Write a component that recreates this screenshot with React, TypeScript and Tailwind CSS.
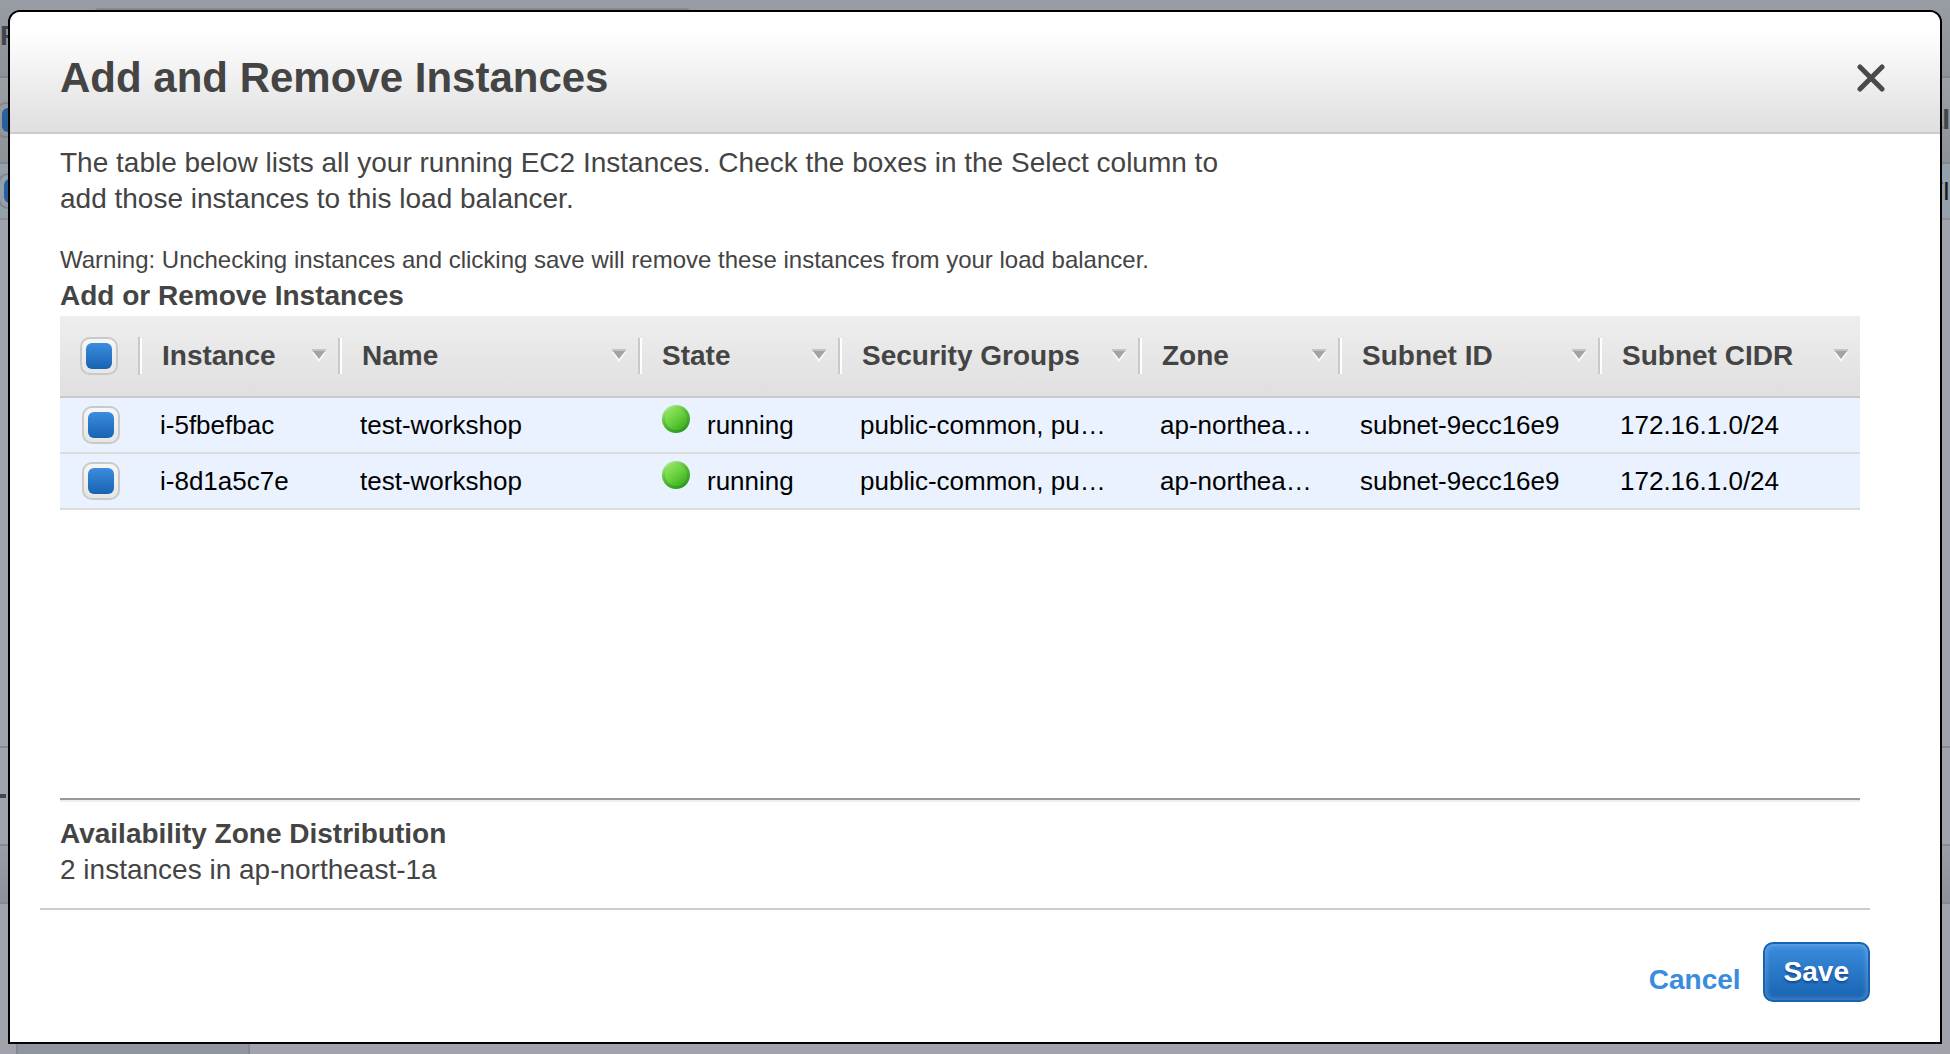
import { useState } from "react";

type Column = { label: string; col: string };

const columns: Column[] = [
  { label: "Instance", col: "w-[200px]" },
  { label: "Name", col: "w-[300px]" },
  { label: "State", col: "w-[200px]" },
  { label: "Security Groups", col: "w-[300px]" },
  { label: "Zone", col: "w-[200px]" },
  { label: "Subnet ID", col: "w-[260px]" },
  { label: "Subnet CIDR", col: "w-[260px]" },
];

const instances = [
  { id: "i-5fbefbac", name: "test-workshop", state: "running", groups: "public-common, pu…", zone: "ap-northea…", subnet: "subnet-9ecc16e9", cidr: "172.16.1.0/24" },
  { id: "i-8d1a5c7e", name: "test-workshop", state: "running", groups: "public-common, pu…", zone: "ap-northea…", subnet: "subnet-9ecc16e9", cidr: "172.16.1.0/24" },
];

function CheckBox({ label, checked, onChange }: { label: string; checked: boolean; onChange: () => void }) {
  return (
    <label className="grid size-[38px] place-items-center rounded-[10px] border-2 border-[#c9c9c9] bg-linear-to-b from-[#f6f6f6] to-[#e6e6e6]">
      <input
        type="checkbox"
        aria-label={label}
        checked={checked}
        onChange={onChange}
        className="size-[26px] appearance-none rounded-md checked:bg-linear-to-b checked:from-[#3b8dde] checked:to-[#1763b2]"
      />
    </label>
  );
}

function SortArrow() {
  return (
    <svg width="14" height="14" viewBox="0 0 14 14" aria-hidden="true" className="shrink-0">
      <path d="M0 3H14L7 13Z" fill="#fbfbfb" />
      <path d="M0 1H14L7 10Z" fill="#a3a3a3" />
      <path d="M0 1H14" stroke="#c4c4c4" strokeWidth="2" />
    </svg>
  );
}

function RunningDot() {
  return (
    <svg width="28" height="28" viewBox="0 0 28 28" aria-hidden="true" className="-mt-3 shrink-0">
      <defs>
        <linearGradient id="dotFill" x1="0.2" y1="0.1" x2="0.85" y2="0.9">
          <stop offset="0" stopColor="#8be35a" />
          <stop offset="0.5" stopColor="#66cf3c" />
          <stop offset="1" stopColor="#3fb025" />
        </linearGradient>
        <linearGradient id="dotRim" x1="0.2" y1="0" x2="0.8" y2="1">
          <stop offset="0" stopColor="#b4ef93" />
          <stop offset="0.4" stopColor="#5cc038" />
          <stop offset="1" stopColor="#27931a" />
        </linearGradient>
      </defs>
      <circle cx="14" cy="14" r="14" fill="url(#dotRim)" />
      <circle cx="14" cy="14" r="11" fill="url(#dotFill)" />
    </svg>
  );
}

/* The dimmed console page that shows round the dialog's edges. */
function ConsoleBackdrop() {
  return (
    <div aria-hidden="true" className="absolute inset-0 flex flex-col overflow-hidden bg-[#a0a3ac] *:shrink-0">
      <div className="flex h-[76px] bg-linear-to-b from-[#989ca4] to-[#8d9198]">
        <span className="mt-5 w-[95px] text-[28px] leading-8 font-bold text-[#41444b]">F</span>
        <div className="mt-2 h-8 w-[595px] rounded-t bg-[#85888f]" />
      </div>
      <div className="flex h-[88px] items-center justify-between border-y-2 border-[#83868e] bg-linear-to-b from-[#9b9fa6] to-[#8d9198]">
        <div className="-ml-1 size-9 rounded-[10px] border-2 border-[#83868e] p-1">
          <div className="size-full rounded-md bg-[#2a609b]" />
        </div>
        <span className="text-[28px] font-bold text-[#41444b]">al</span>
      </div>
      <div className="flex h-14 items-center justify-between border-b-2 border-[#8b8f98] bg-[#94a0ac]">
        <div className="-ml-0.5 size-9 rounded-[10px] border-2 border-[#83868e] p-1">
          <div className="size-full rounded-md bg-[#2a609b]" />
        </div>
        <span className="text-[26px] text-[#16181c]">TI</span>
      </div>
      <div className="h-[526px]" />
      <div className="flex h-[100px] items-center border-y-2 border-[#858992]">
        <span className="h-1 w-1.5 bg-[#43464d]" />
      </div>
      <div className="h-[58px] border-b-2 border-[#858992] bg-linear-to-b from-[#9a9da6] to-[#8d9199]" />
      <div className="h-[120px]" />
      <div className="ml-4 h-12 w-[234px] rounded-lg border-2 border-[#858992] bg-[#91959d]" />
    </div>
  );
}

export default function App() {
  const [selected, setSelected] = useState<boolean[]>(instances.map(() => true));
  const allSelected = selected.every(Boolean);
  const toggle = (index: number) => setSelected(selected.map((value, i) => (i === index ? !value : value)));

  return (
    <div className="relative min-h-screen px-2 py-2.5 font-['Liberation_Sans',Arial,sans-serif] text-[#444]">
      <ConsoleBackdrop />
      <section
        role="dialog"
        aria-labelledby="dialog-title"
        className="relative flex min-h-[calc(100vh-20px)] flex-col overflow-hidden rounded-t-xl border-2 border-black bg-white"
      >
        <header className="flex h-[122px] items-center justify-between border-b-2 border-[#ccc] bg-linear-to-b from-white from-15% to-[#dfdfdf] pt-3 pr-[51px] pl-[50px]">
          <h1 id="dialog-title" className="text-[42px] leading-[52px] font-bold">Add and Remove Instances</h1>
          <button type="button" aria-label="Close" className="p-1">
            <svg width="28" height="28" viewBox="0 0 28 28" fill="none" stroke="#4a4a4a" strokeWidth="5" strokeLinecap="round">
              <path d="M3 3L25 25M25 3L3 25" />
            </svg>
          </button>
        </header>

        <main className="flex grow flex-col pt-[11px] pr-[80px] pl-[50px]">
          <p className="max-w-[1200px] text-[28px] leading-9">
            The table below lists all your running EC2 Instances. Check the boxes in the Select column to add those instances to this load balancer.
          </p>
          <p className="mt-[25px] text-2xl leading-9">
            Warning: Unchecking instances and clicking save will remove these instances from your load balancer.
          </p>
          <h2 className="text-[28px] leading-9 font-bold">Add or Remove Instances</h2>

          <div className="min-h-[482px] grow pt-0.5">
            <table className="w-full table-fixed border-separate border-spacing-0 text-left">
              <colgroup>
                <col className="w-[80px]" />
                {columns.map((column) => (
                  <col key={column.label} className={column.col} />
                ))}
              </colgroup>
              <thead>
                <tr className="h-[82px] bg-linear-to-b from-[#eeeeee] to-[#dfdfdf]">
                  <th scope="col" className="border-b-2 border-[#c9c9c9] p-0">
                    <div className="flex h-[38px] border-r-2 border-[#c9c9c9] pl-5">
                      <CheckBox
                        label="Select all instances"
                        checked={allSelected}
                        onChange={() => setSelected(selected.map(() => !allSelected))}
                      />
                    </div>
                  </th>
                  {columns.map((column) => (
                    <th key={column.label} scope="col" className="group border-b-2 border-[#c9c9c9] p-0">
                      <div className="flex h-9 items-center justify-between border-r-2 border-l-2 border-r-[#c9c9c9] border-l-white pr-3 pl-5 text-[28px] font-bold group-last:border-r-transparent group-last:pr-2.5">
                        <span className="whitespace-nowrap">{column.label}</span>
                        <SortArrow />
                      </div>
                    </th>
                  ))}
                </tr>
              </thead>
              <tbody>
                {instances.map((instance, index) => (
                  <tr
                    key={instance.id}
                    className="h-14 bg-[#e9f2fe] text-[26px] leading-8 whitespace-nowrap text-black *:border-b-2 *:border-[#dcdcdc] *:px-5 *:py-0"
                  >
                    <td>
                      <div className="ml-0.5">
                        <CheckBox label={"Select " + instance.id} checked={selected[index]} onChange={() => toggle(index)} />
                      </div>
                    </td>
                    <td>{instance.id}</td>
                    <td>{instance.name}</td>
                    <td>
                      <div className="flex items-center gap-[17px] pl-0.5">
                        <RunningDot />
                        {instance.state}
                      </div>
                    </td>
                    <td>{instance.groups}</td>
                    <td>{instance.zone}</td>
                    <td>{instance.subnet}</td>
                    <td>{instance.cidr}</td>
                  </tr>
                ))}
              </tbody>
            </table>
          </div>

          <hr className="h-1 border-t-2 border-b-2 border-t-[#999] border-b-[#eee]" />
          <h2 className="mt-3.5 text-[28px] leading-9 font-bold">Availability Zone Distribution</h2>
          <p className="text-[28px] leading-9">2 instances in ap-northeast-1a</p>
        </main>

        <footer className="mt-5 mr-[70px] ml-[30px] flex justify-end gap-[22px] border-t-2 border-[#ccc] pt-8 pb-10">
          <a href="#cancel" className="mt-5 text-[28px] leading-9 font-bold text-[#3a8dde]">Cancel</a>
          <button
            type="button"
            className="h-[60px] rounded-[10px] border-2 border-[#1763b2] bg-linear-to-b from-[#3b8dde] to-[#1763b2] px-[19px] text-[28px] font-bold text-white shadow-[inset_0_0_6px_rgba(255,255,255,0.35)] text-shadow-[0_2px_2px_#134a94]"
          >
            Save
          </button>
        </footer>
      </section>
    </div>
  );
}
